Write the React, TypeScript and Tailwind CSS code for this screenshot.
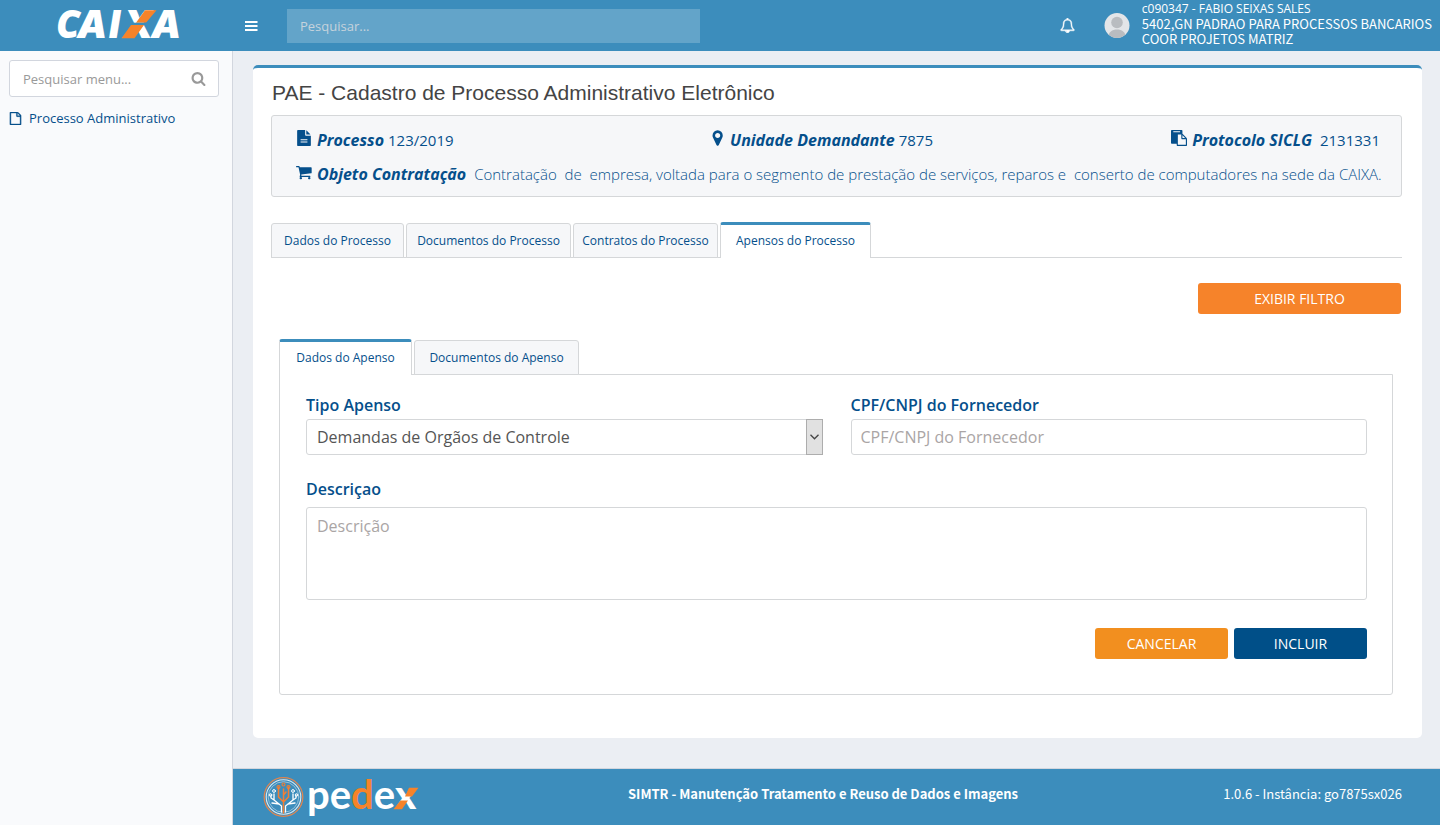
import React from 'react';

const FA = {
  search:
    'M1216 832q0-185-131.5-316.5t-316.5-131.5-316.5 131.5-131.5 316.5 131.5 316.5 316.5 131.5 316.5-131.5 131.5-316.5zm512 832q0 52-38 90t-90 38q-54 0-90-38l-343-342q-179 124-399 124-143 0-273.5-55.5t-225-150-150-225-55.5-273.5 55.5-273.5 150-225 225-150 273.5-55.5 273.5 55.5 225 150 150 225 55.5 273.5q0 220-124 399l343 343q37 37 37 90z',
  file: 'M1596 380q28 28 48 76t20 88v1152q0 40-28 68t-68 28h-1344q-40 0-68-28t-28-68v-1600q0-40 28-68t68-28h896q40 0 88 20t76 48zm-444-244v376h376q-10-29-22-41l-313-313q-12-12-41-22zm384 1528v-1024h-416q-40 0-68-28t-28-68v-416h-768v1536h1280z',
  fileText:
    'M1596 476q14 14 28 36h-472v-472q22 14 36 28zm-476 164h544v1056q0 40-28 68t-68 28h-1344q-40 0-68-28t-28-68v-1600q0-40 28-68t68-28h800v544q0 40 28 68t68 28zm160 736v-64q0-14-9-23t-23-9h-704q-14 0-23 9t-9 23v64q0 14 9 23t23 9h704q14 0 23-9t9-23zm0-256v-64q0-14-9-23t-23-9h-704q-14 0-23 9t-9 23v64q0 14 9 23t23 9h704q14 0 23-9t9-23z',
  cart: 'M704 1536q0 52-38 90t-90 38-90-38-38-90 38-90 90-38 90 38 38 90zm896 0q0 52-38 90t-90 38-90-38-38-90 38-90 90-38 90 38 38 90zm128-1088v512q0 24-16.5 42.5t-40.5 21.5l-1044 122q13 60 13 70 0 16-24 64h920q26 0 45 19t19 45-19 45-45 19h-1024q-26 0-45-19t-19-45q0-11 8-31.5t16-36 21.5-40 15.5-29.5l-177-823h-204q-26 0-45-19t-19-45 19-45 45-19h256q16 0 28.5 6.5t19.5 15.5 13 24.5 8 26 5.5 29.5 4.5 26h1201q26 0 45 19t19 45z',
  marker:
    'M1152 640q0-106-75-181t-181-75-181 75-75 181 75 181 181 75 181-75 75-181zm256 0q0 109-33 179l-364 774q-16 33-47.5 52t-67.5 19-67.5-19-46.5-52l-365-774q-33-70-33-179 0-212 150-362t362-150 362 150 150 362z',
  paste:
    'M768 1664h896v-640h-416q-40 0-68-28t-28-68v-416h-384v1152zm256-1440v-64q0-13-9.5-22.5t-22.5-9.5h-704q-13 0-22.5 9.5t-9.5 22.5v64q0 13 9.5 22.5t22.5 9.5h704q13 0 22.5-9.5t9.5-22.5zm256 672h299l-299-299v299zm512 128v672q0 40-28 68t-68 28h-960q-40 0-68-28t-28-68v-160h-544q-40 0-68-28t-28-68v-1344q0-40 28-68t68-28h1088q40 0 68 28t28 68v328q21 13 36 28l408 408q28 28 48 76t20 88z',
  bell: 'M912 1696q0-16-16-16-59 0-101.5-42.5t-42.5-101.5q0-16-16-16t-16 16q0 73 51.5 124.5t124.5 51.5q16 0 16-16zm-666-288h1300q-266-300-266-832 0-51-24-105t-69-103-121.5-80.5-169.5-31.5-169.5 31.5-121.5 80.5-69 103-24 105q0 532-266 832zm1482 0q0 52-38 90t-90 38h-448q0 106-75 181t-181 75-181-75-75-181h-448q-52 0-90-38t-38-90q50-42 91-88t85-119.5 74.5-158.5 50-206 19.5-260q0-152 117-282.5t307-158.5q-8-19-8-39 0-40 28-68t68-28 68 28 28 68q0 20-8 39 190 28 307 158.5t117 282.5q0 139 19.5 260t50 206 74.5 158.5 85 119.5 91 88z',
};

function Icon({ d, className, viewBox = '0 0 1792 1792', strokeWidth = 0 }: { d: string; className: string; viewBox?: string; strokeWidth?: number }) {
  return (
    <svg viewBox={viewBox} className={className} fill="currentColor" stroke="currentColor" strokeWidth={strokeWidth} aria-hidden="true">
      <path d={d} />
    </svg>
  );
}

function CaixaLogo() {
  return (
    <svg width="128" height="32" viewBox="0 0 128 32" className="overflow-visible font-['Inter',sans-serif] text-[38px] font-black italic" aria-label="CAIXA">
      <text x="-1 20 52 66 94" y="30" fill="#fff">
        <tspan className="font-['Open_Sans',sans-serif] font-extrabold">C</tspan>AIXA
      </text>
      <path d="M88 2.300H99.500L89 14.700H79zM74 17H87L77.500 30.200H64.500z" fill="#f6832a" />
      <path d="M72 14.700H92V17H72z" fill="#3c8dbc" />
    </svg>
  );
}

function PedexLogo() {
  return (
    <svg width="158" height="44" viewBox="0 0 158 44" className="overflow-visible" aria-label="pedex">
      <g fill="none" strokeLinecap="round">
        <circle cx="20.500" cy="22" r="19.300" stroke="#e0854f" strokeWidth="1.300" />
        <circle cx="20.500" cy="22" r="17.300" stroke="#dbe9f2" strokeWidth="1.100" />
        <circle cx="20.500" cy="22" r="15.300" stroke="#a9cce0" strokeWidth="0.800" />
        <path d="M18.500 37V31L11 25V19M22.500 37V31L30 25V19M11 25L8 23V20M30 25L33 23V20M16 29L9 28M25 29L32 28" stroke="#fff" strokeWidth="1.300" />
        <path d="M20.500 38V14M20.500 27L15.500 22V12M20.500 27L25.500 22V12M20.500 20L23 17" stroke="#f07f35" strokeWidth="1.500" />
        <g stroke="#f07f35" strokeWidth="1.100">
          <circle cx="15.500" cy="12" r="1.500" />
          <circle cx="20.500" cy="9.500" r="1.500" />
          <circle cx="25.500" cy="12" r="1.500" />
        </g>
        <g stroke="#fff" strokeWidth="1">
          <circle cx="11" cy="16" r="1.400" />
          <circle cx="30" cy="16" r="1.400" />
          <circle cx="7.500" cy="20" r="1.300" />
          <circle cx="33.500" cy="20" r="1.300" />
        </g>
      </g>
      <text x="44" y="34" fill="#fff" className="font-['Lato',sans-serif] text-[40px] font-bold">
        pe<tspan fill="#f6832a">d</tspan>e<tspan x="132" className="font-black">x</tspan>
      </text>
      <path d="M146 12.700H155.500L149 21.500H142zM137.500 25.500H145L139 34.200H130.500z" fill="#f6832a" />
    </svg>
  );
}

function Tab({ label, active, width }: { label: string; active?: boolean; width: string }) {
  const state = active
    ? 'h-9 border-t-[3px] border-t-[#3c8dbc] bg-white pb-[2px]'
    : 'h-[35px] border-t border-t-[#d5d7d9] border-b border-b-[#d5d7d9] bg-[#f6f7f9]';
  return (
    <button type="button" role="tab" aria-selected={!!active} className={`rounded-t-[3px] border-x border-x-[#d5d7d9] text-xs text-[#054f8b] ${state} ${width}`}>
      {label}
    </button>
  );
}

function Info({ icon, label, value, long, viewBox }: { icon: string; label: string; value: string; long?: boolean; viewBox?: string }) {
  return (
    <div className="flex h-[34px] items-center gap-1">
      <Icon d={icon} viewBox={viewBox} className="mr-px mb-1 size-4 shrink-0" />
      <strong className="text-base font-bold whitespace-nowrap italic">{label}</strong>
      <span className={long ? 'text-[15px] font-[350] whitespace-pre' : 'text-[15px] whitespace-pre'}>{value}</span>
    </div>
  );
}

export default function App() {
  return (
    <div className="flex min-h-screen flex-col bg-[#ebeef3] font-['Open_Sans',sans-serif] text-[#054f8b]">
      <header className="flex h-[51px] items-center bg-[#3c8dbc] text-white">
        <div className="w-[233px] shrink-0 pb-1 pl-[57px]">
          <CaixaLogo />
        </div>
        <button type="button" aria-label="Alternar menu" className="ml-3 w-[42px] text-white">
          <svg width="13" height="10" viewBox="0 0 13 10" fill="currentColor" aria-hidden="true">
            <path d="M0 0h12.500v2H0zM0 4h12.500v2H0zM0 8h12.500v2H0z" />
          </svg>
        </button>
        <input type="text" aria-label="Pesquisar" placeholder="Pesquisar..." className="h-[34px] w-[413px] bg-[#63a4c9] px-[13px] text-[13px] text-white outline-none placeholder:text-[#c6d3dc]" />
        <div className="ml-auto flex items-center pr-2">
          <button type="button" aria-label="Notificações" className="mr-[29px]">
            <Icon d={FA.bell} className="size-[15px]" strokeWidth={50} />
          </button>
          <svg width="26" height="26" viewBox="0 0 26 26" className="mr-3" aria-hidden="true">
            <defs>
              <clipPath id="avatar-clip">
                <circle cx="13" cy="12.500" r="12.500" />
              </clipPath>
            </defs>
            <g clipPath="url(#avatar-clip)">
              <rect width="26" height="26" fill="#e3e5e8" />
              <circle cx="13" cy="9.500" r="5.800" fill="#b9bcc0" />
              <path d="M4 26c0-7 4-9.500 9-9.500s9 2.500 9 9.500z" fill="#b9bcc0" />
            </g>
          </svg>
          <div className="pb-[5px] text-[13px] leading-[15px] whitespace-nowrap">
            <div className="text-xs leading-[15px]">c090347 - FABIO SEIXAS SALES</div>
            <div className="font-['Noto_Sans_CJK_SC',sans-serif]">5402,GN PADRAO PARA PROCESSOS BANCARIOS</div>
            <div className="font-['Noto_Sans_CJK_SC',sans-serif]">COOR PROJETOS MATRIZ</div>
          </div>
        </div>
      </header>

      <div className="flex flex-1">
        <aside className="w-[233px] shrink-0 border-r border-[#d2d6de] bg-[#f9fafc] px-[9px] pt-[9px]">
          <div className="mr-1 flex h-[37px] items-center rounded-[3px] border border-[#d2d6de] bg-white pr-3">
            <input type="text" aria-label="Pesquisar menu" placeholder="Pesquisar menu..." className="h-full min-w-0 flex-1 bg-transparent pt-px pl-[13px] text-[13px] outline-none placeholder:text-[#999]" />
            <button type="button" aria-label="Buscar" className="text-[#999]">
              <Icon d={FA.search} className="size-[15px]" />
            </button>
          </div>
          <nav className="mt-3">
            <a href="#processo" className="flex items-center gap-[7px] text-[13px] leading-[18px]">
              <Icon d={FA.file} className="size-[13px]" strokeWidth={60} />
              Processo Administrativo
            </a>
          </nav>
        </aside>

        <div className="flex min-w-0 flex-1 flex-col">
          <main className="mt-[14px] mr-[18px] mb-[30px] ml-5 flex-1 rounded-[5px] border-t-[3px] border-[#3c8dbc] bg-white pr-5 pb-[43px] pl-[18px]">
            <h1 className="pt-[10px] pl-px font-['Liberation_Sans',Arial,sans-serif] text-[21px] leading-[30px] text-[#444]">
              PAE - Cadastro de Processo Administrativo Eletrônico
            </h1>
            <section className="mt-[7px] rounded-[3px] border border-[#d5d7d9] bg-[#f6f7f9] pt-[7px] pr-[21px] pb-[5px] pl-6">
              <div className="grid grid-cols-[413fr_462fr_auto]">
                <Info icon={FA.fileText} label="Processo" value="123/2019" />
                <Info icon={FA.marker} label="Unidade Demandante" value="7875" viewBox="32 96 1600 1600" />
                <Info icon={FA.paste} label="Protocolo SICLG" value=" 2131331" />
              </div>
              <Info
                icon={FA.cart}
                label="Objeto Contratação"
                value=" Contratação  de  empresa, voltada para o segmento de prestação de serviços, reparos e  conserto de computadores na sede da CAIXA."
                viewBox="64 32 1700 1700"
                long
              />
            </section>

            <div role="tablist" className="mt-[25px] flex items-end gap-[2px] border-b border-[#d5d7d9] *:-mb-px">
              <Tab label="Dados do Processo" width="w-[133px]" />
              <Tab label="Documentos do Processo" width="w-[165px]" />
              <Tab label="Contratos do Processo" width="w-[145px]" />
              <Tab label="Apensos do Processo" width="w-[151px]" active />
            </div>

            <div className="mt-[25px] flex justify-end">
              <button type="button" className="mr-px h-[31px] w-[203px] rounded-[3px] bg-[#f6832a] text-sm text-white">
                EXIBIR FILTRO
              </button>
            </div>

            <div className="mt-[25px] mr-[9px] ml-2">
              <div role="tablist" className="flex items-end gap-[2px] *:-mb-px">
                <Tab label="Dados do Apenso" width="w-[133px]" active />
                <Tab label="Documentos do Apenso" width="w-[165px]" />
              </div>
              <form className="rounded-b-[3px] border border-[#d5d7d9] pt-[18px] pr-[25px] pb-[35px] pl-[26px]" onSubmit={(e) => e.preventDefault()}>
                <div className="grid grid-cols-2 gap-7">
                  <div>
                    <label htmlFor="tipo" className="mb-[2px] block leading-6 font-semibold">Tipo Apenso</label>
                    <div className="relative">
                      <select id="tipo" className="h-9 w-full appearance-none rounded-[3px] border border-[#d5d7d9] bg-white pr-6 pl-[10px] text-base text-[#555] outline-none">
                        <option>Demandas de Orgãos de Controle</option>
                      </select>
                      <span className="pointer-events-none absolute inset-y-0 right-0 flex w-[17px] items-center justify-center border border-[#adadad] bg-[#e1e1e1]">
                        <svg width="9" height="6" viewBox="0 0 9 6" fill="none" stroke="#444" strokeWidth="1.300" aria-hidden="true">
                          <path d="M0.500 0.800L4.500 4.800L8.500 0.800" />
                        </svg>
                      </span>
                    </div>
                  </div>
                  <div>
                    <label htmlFor="cpf" className="mb-[2px] block leading-6 font-semibold">CPF/CNPJ do Fornecedor</label>
                    <input id="cpf" type="text" placeholder="CPF/CNPJ do Fornecedor" className="h-9 w-full rounded-[3px] border border-[#d5d7d9] px-[9px] text-base text-[#555] outline-none placeholder:text-[#aaa5a5]" />
                  </div>
                </div>
                <label htmlFor="descricao" className="mt-[22px] mb-[6px] block leading-6 font-semibold">Descriçao</label>
                <textarea id="descricao" placeholder="Descrição" className="block h-[93px] w-full resize-none rounded-[3px] border border-[#d5d7d9] px-[10px] py-[6px] text-base text-[#555] outline-none placeholder:text-[#aaa5a5]" />
                <div className="mt-7 flex justify-end gap-[6px] text-sm text-white">
                  <button type="button" className="h-[31px] w-[133px] rounded-[3px] bg-[#f28f1f]">CANCELAR</button>
                  <button type="submit" className="h-[31px] w-[133px] rounded-[3px] bg-[#004f88]">INCLUIR</button>
                </div>
              </form>
            </div>
          </main>

          <footer className="grid h-[57px] grid-cols-[365fr_auto_384fr] items-center border-t border-[#d2d6de] bg-[#3c8dbc] pr-[38px] pl-[30px] font-['Noto_Sans_CJK_SC',sans-serif] text-[13px] text-white">
            <PedexLogo />
            <strong className="pb-[6px] font-bold">SIMTR - Manutenção Tratamento e Reuso de Dados e Imagens</strong>
            <span className="pb-[6px] text-right">1.0.6 - Instância: go7875sx026</span>
          </footer>
        </div>
      </div>
    </div>
  );
}
